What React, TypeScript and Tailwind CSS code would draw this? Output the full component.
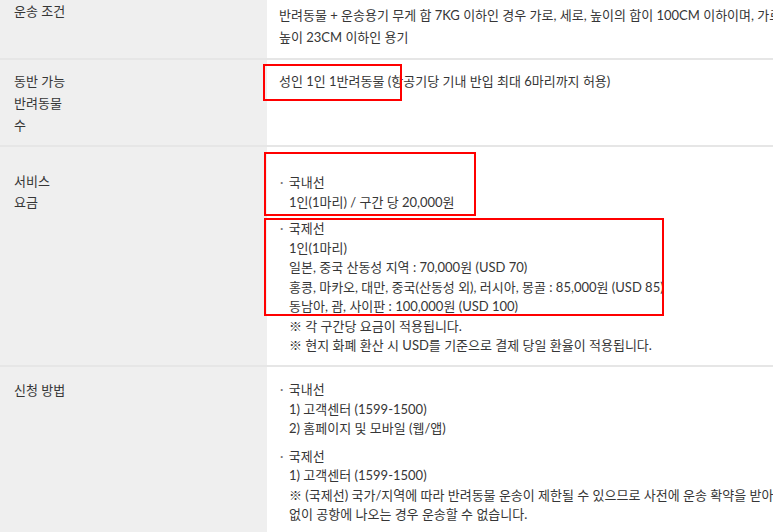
const font = { fontFamily: 'Lato, "Noto Sans CJK KR", sans-serif' };

function Row({
  label,
  children,
  className = '',
}: {
  label: React.ReactNode;
  children: React.ReactNode;
  className?: string;
}) {
  return (
    <div className={`flex border-b-2 border-[#e6e6e6] ${className}`}>
      <div className="w-[267px] shrink-0 bg-[#efefef] pl-[14px] leading-[22px]">{label}</div>
      <div className="flex-1 pl-[12px] whitespace-nowrap">{children}</div>
    </div>
  );
}

function Group({ title, lines, className = '' }: { title: string; lines: string[]; className?: string }) {
  return (
    <div className={`leading-[19.5px] ${className}`}>
      <div className="pl-[1px]">
        <span className="mr-[2px] text-[#777]">·</span> {title}
      </div>
      {lines.map((l) => (
        <div key={l} className="pl-[10px]">
          {l}
        </div>
      ))}
    </div>
  );
}

export default function App() {
  return (
    <div className="relative w-[773px] h-[532px] overflow-hidden bg-white text-[13px] text-[#363636]" style={font}>
      <Row label="운송 조건" className="h-[60px]">
        <div className="pt-[4px] leading-[22px]">
          <div>반려동물 + 운송용기 무게 합 7KG 이하인 경우 가로, 세로, 높이의 합이 100CM 이하이며, 가로 45CM, 세로 35CM,</div>
          <div>높이 23CM 이하인 용기</div>
        </div>
      </Row>

      <Row
        label={
          <div className="pt-[10px]">
            동반 가능
            <br />
            반려동물
            <br />수
          </div>
        }
        className="h-[87px]"
      >
        <div className="pt-[10px] leading-[22px]">성인 1인 1반려동물 (항공기당 기내 반입 최대 6마리까지 허용)</div>
      </Row>

      <Row
        label={
          <div className="pt-[24px] leading-[21px]">
            서비스
            <br />
            요금
          </div>
        }
        className="h-[220px]"
      >
        <div className="pt-[26px]">
          <Group title="국내선" lines={['1인(1마리) / 구간 당 20,000원']} />
          <Group
            title="국제선"
            className="mt-[7px]"
            lines={[
              '1인(1마리)',
              '일본, 중국 산동성 지역 : 70,000원 (USD 70)',
              '홍콩, 마카오, 대만, 중국(산동성 외), 러시아, 몽골 : 85,000원 (USD 85)',
              '동남아, 괌, 사이판 : 100,000원 (USD 100)',
              '※ 각 구간당 요금이 적용됩니다.',
              '※ 현지 화폐 환산 시 USD를 기준으로 결제 당일 환율이 적용됩니다.',
            ]}
          />
        </div>
      </Row>

      <Row label={<div className="pt-[12px]">신청 방법</div>} className="h-[200px] border-b-0">
        <div className="pt-[13px]">
          <Group title="국내선" lines={['1) 고객센터 (1599-1500)', '2) 홈페이지 및 모바일 (웹/앱)']} />
          <Group
            title="국제선"
            className="mt-[8px]"
            lines={[
              '1) 고객센터 (1599-1500)',
              '※ (국제선) 국가/지역에 따라 반려동물 운송이 제한될 수 있으므로 사전에 운송 확약을 받아주시기 바랍니다. 운송 확약',
              '없이 공항에 나오는 경우 운송할 수 없습니다.',
            ]}
          />
        </div>
      </Row>

      {/* annotation boxes */}
      <div className="absolute left-[263px] top-[64px] w-[139px] h-[37px] border-2 border-[#ff0000]" />
      <div className="absolute left-[264px] top-[152px] w-[212px] h-[64px] border-2 border-[#ff0000]" />
      <div className="absolute left-[264px] top-[218px] w-[400px] h-[98px] border-2 border-[#ff0000]" />
    </div>
  );
}
